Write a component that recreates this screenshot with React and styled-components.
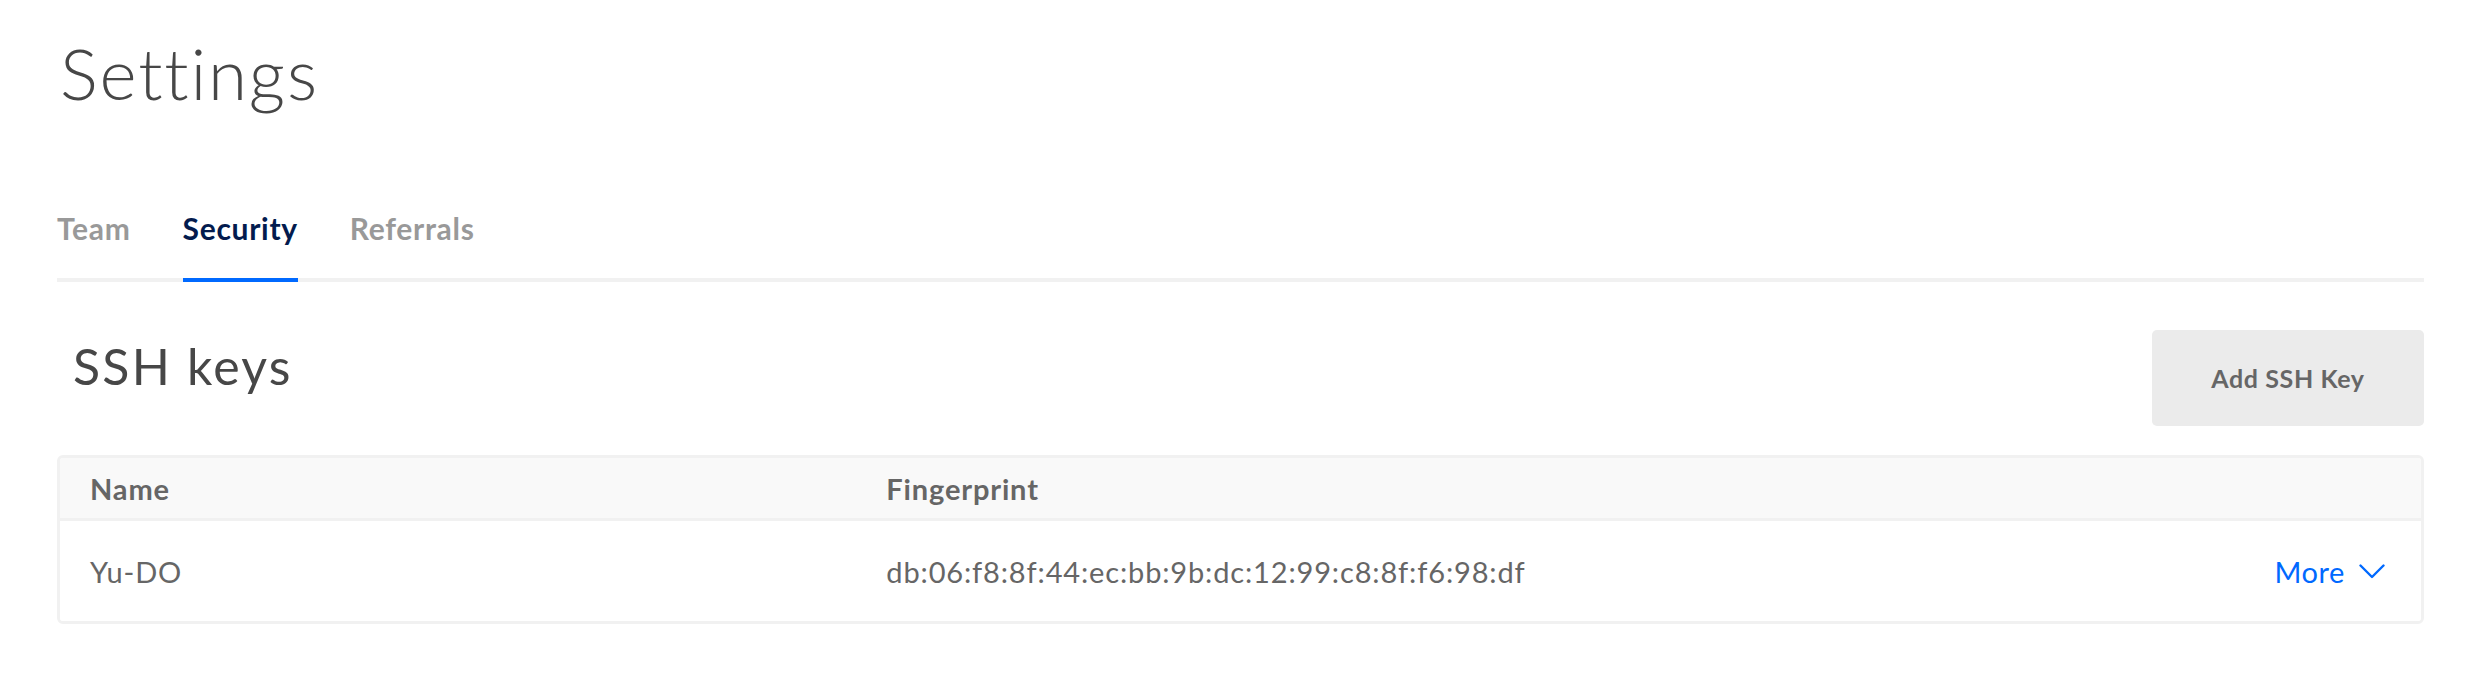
import React, { useState } from 'react';
import styled, { createGlobalStyle } from 'styled-components';

const GlobalStyle = createGlobalStyle`
    html, body {
        margin: 0;
        padding: 0;
        background: #fff;
    }
    body {
        font-family: Lato, "Open Sans", "Liberation Sans", sans-serif;
        -webkit-font-smoothing: antialiased;
    }
`;

const Page = styled.div`
    padding: 37px 50px 0 57px;
`;

const Title = styled.h1`
    margin: 0 0 0 3px;
    font-size: 71px;
    line-height: 1;
    font-weight: 300;
    letter-spacing: 1.8px;
    color: #474747;
`;

const TabList = styled.nav`
    display: flex;
    gap: 52px;
    margin-top: 105px;
    border-bottom: 4px solid #f1f1f1;
`;

const Tab = styled.button`
    background: none;
    border: none;
    padding: 0 0 35px;
    margin-bottom: -4px;
    border-bottom: 4px solid ${({ active }) => (active ? '#0069ff' : 'transparent')};
    font-family: inherit;
    font-size: 30px;
    line-height: 1;
    font-weight: 700;
    letter-spacing: 0.7px;
    color: ${({ active }) => (active ? '#031b4e' : '#999')};
    cursor: pointer;
`;

const SectionHeader = styled.div`
    display: flex;
    justify-content: space-between;
    align-items: flex-start;
    margin-top: 48px;
`;

const SectionTitle = styled.h2`
    margin: 11px 0 0 16px;
    font-size: 50px;
    line-height: 1;
    font-weight: 400;
    letter-spacing: 2.2px;
    color: #474747;
`;

const AddButton = styled.button`
    width: 272px;
    height: 96px;
    border: none;
    border-radius: 5px;
    background: #ebebeb;
    color: #666;
    font-family: inherit;
    font-size: 25px;
    font-weight: 700;
    letter-spacing: 0.6px;
    cursor: pointer;
`;

const Table = styled.div`
    margin-top: 29px;
    border: 3px solid #f1f1f1;
    border-radius: 6px;
    overflow: hidden;
`;

const Row = styled.div`
    display: grid;
    grid-template-columns: 34.7% 1fr auto;
    align-items: center;
    height: ${({ head }) => (head ? '60px' : '100px')};
    background: ${({ head }) => (head ? '#f9f9f9' : '#fff')};
    border-bottom: ${({ head }) => (head ? '3px solid #f1f1f1' : 'none')};
    padding: 0 36px 0 30px;
`;

const Cell = styled.div`
    font-size: 29px;
    line-height: 1;
    font-weight: ${({ head }) => (head ? 700 : 400)};
    letter-spacing: 0.85px;
    color: #666;
`;

const MoreLink = styled.a`
    display: flex;
    align-items: center;
    gap: 14px;
    font-size: 29px;
    line-height: 1;
    letter-spacing: 0.6px;
    color: #0069ff;
    cursor: pointer;
`;

const Chevron = () => (
    <svg width="26" height="15" viewBox="0 0 26 15" fill="none">
        <polyline points="1.5,1.5 13,13 24.5,1.5" stroke="#0069ff" strokeWidth="2.4" strokeLinecap="round" strokeLinejoin="round" />
    </svg>
);

const keys = [
    { id: 1, name: 'Yu-DO', fingerprint: 'db:06:f8:8f:44:ec:bb:9b:dc:12:99:c8:8f:f6:98:df' },
];

const App = () => {
    const [tab, setTab] = useState('Security');

    return (
        <>
            <GlobalStyle />
            <Page>
                <Title>Settings</Title>
                <TabList>
                    {['Team', 'Security', 'Referrals'].map(t => (
                        <Tab key={t} active={t === tab} onClick={() => setTab(t)}>{t}</Tab>
                    ))}
                </TabList>

                <SectionHeader>
                    <SectionTitle>SSH keys</SectionTitle>
                    <AddButton>Add SSH Key</AddButton>
                </SectionHeader>

                <Table>
                    <Row head>
                        <Cell head>Name</Cell>
                        <Cell head>Fingerprint</Cell>
                        <span />
                    </Row>
                    {keys.map(k => (
                        <Row key={k.id}>
                            <Cell>{k.name}</Cell>
                            <Cell>{k.fingerprint}</Cell>
                            <MoreLink>More <Chevron /></MoreLink>
                        </Row>
                    ))}
                </Table>
            </Page>
        </>
    );
};

export default App;
